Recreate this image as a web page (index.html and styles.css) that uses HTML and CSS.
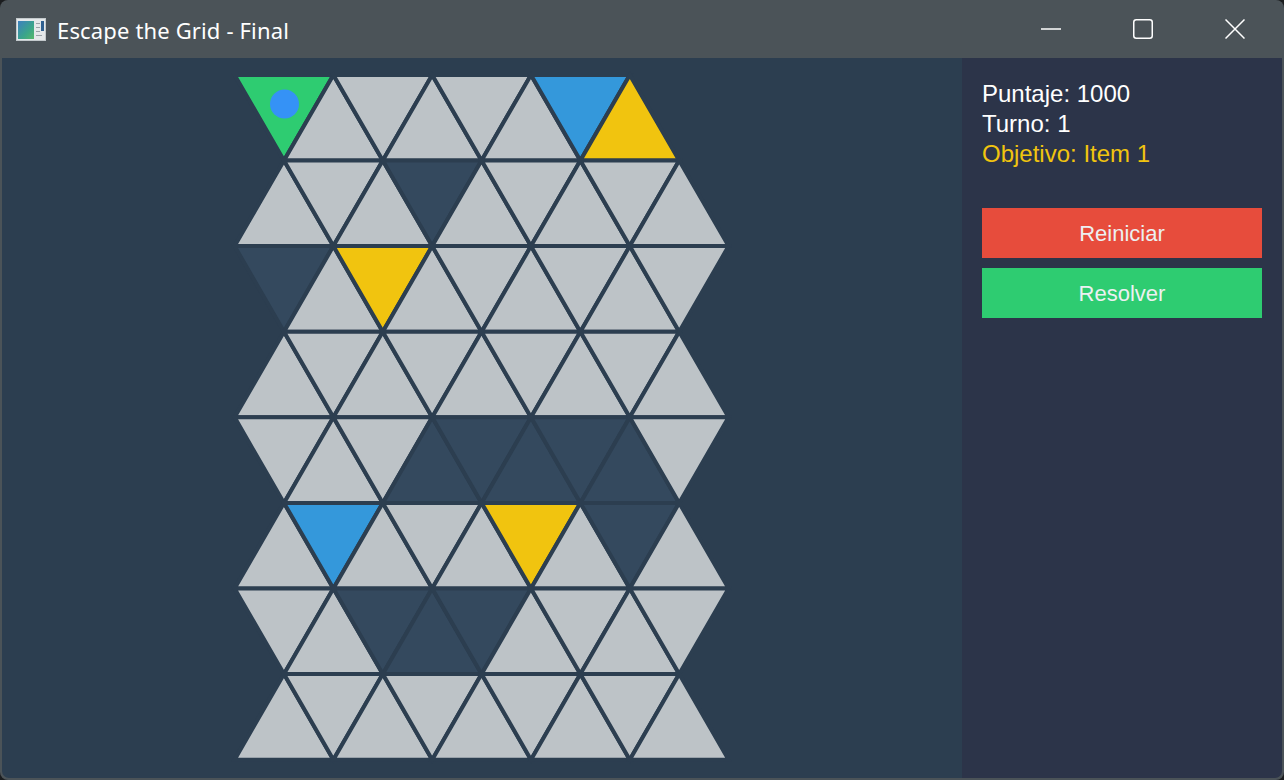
FILE: index.html
```html
<!DOCTYPE html>
<html lang="es">
<head>
<meta charset="utf-8">
<title>Escape the Grid - Final</title>
<link rel="stylesheet" href="styles.css">
</head>
<body>
<div class="window">
  <header class="titlebar">
    <svg class="app-icon" width="30" height="23" viewBox="0 0 30 23">
      <defs>
        <linearGradient id="ig" x1="0" y1="0" x2="1" y2="1">
          <stop offset="0" stop-color="#3d7fc0"/>
          <stop offset="0.6" stop-color="#3aa58a"/>
          <stop offset="1" stop-color="#56b86a"/>
        </linearGradient>
      </defs>
      <rect x="0" y="0" width="30" height="23" fill="#e4e8ea"/>
      <rect x="0.5" y="0.5" width="29" height="22" fill="none" stroke="#c3c9cc"/>
      <rect x="2" y="3" width="16" height="18" fill="url(#ig)"/>
      <rect x="25" y="3" width="3" height="10" fill="#2f5f8f"/>
      <rect x="20" y="5" width="4" height="1" fill="#9aa3a8"/>
      <rect x="20" y="9" width="4" height="1" fill="#9aa3a8"/>
      <rect x="20" y="13" width="4" height="1" fill="#9aa3a8"/>
      <rect x="20" y="17" width="6" height="1" fill="#9aa3a8"/>
    </svg>
    <span class="title">Escape the Grid - Final</span>
    <div class="controls">
      <div class="ctrl">
        <svg width="20" height="20" viewBox="0 0 20 20"><line x1="0" y1="10" x2="20" y2="10" stroke="#fff" stroke-width="1.5"/></svg>
      </div>
      <div class="ctrl">
        <svg width="20" height="20" viewBox="0 0 20 20"><rect x="0.75" y="0.75" width="18.5" height="18.5" rx="2.5" fill="none" stroke="#fff" stroke-width="1.5"/></svg>
      </div>
      <div class="ctrl">
        <svg width="20" height="20" viewBox="0 0 20 20"><path d="M0.5 0.5 L19.5 19.5 M19.5 0.5 L0.5 19.5" stroke="#fff" stroke-width="1.5" fill="none"/></svg>
      </div>
    </div>
  </header>
  <main class="content">
    <section class="game">
      <svg class="board" width="960" height="720" viewBox="2 58 960 720">
        <defs>
          <polygon id="dn" points="0,0 98.8,0 49.4,85.6"/>
          <polygon id="up" points="49.4,0 98.8,85.6 0,85.6"/>
        </defs>
        <g class="cells">
          <!-- row 0 -->
          <use href="#dn" x="234.6" y="74.9" class="c-g"/>
          <use href="#up" x="284" y="74.9" class="c-l"/>
          <use href="#dn" x="333.4" y="74.9" class="c-l"/>
          <use href="#up" x="382.8" y="74.9" class="c-l"/>
          <use href="#dn" x="432.2" y="74.9" class="c-l"/>
          <use href="#up" x="481.6" y="74.9" class="c-l"/>
          <use href="#dn" x="531" y="74.9" class="c-b"/>
          <use href="#up" x="580.4" y="74.9" class="c-y"/>
          <!-- row 1 -->
          <use href="#up" x="234.6" y="160.5" class="c-l"/>
          <use href="#dn" x="284" y="160.5" class="c-l"/>
          <use href="#up" x="333.4" y="160.5" class="c-l"/>
          <use href="#dn" x="382.8" y="160.5" class="c-w"/>
          <use href="#up" x="432.2" y="160.5" class="c-l"/>
          <use href="#dn" x="481.6" y="160.5" class="c-l"/>
          <use href="#up" x="531" y="160.5" class="c-l"/>
          <use href="#dn" x="580.4" y="160.5" class="c-l"/>
          <use href="#up" x="629.8" y="160.5" class="c-l"/>
          <!-- row 2 -->
          <use href="#dn" x="234.6" y="246.1" class="c-w"/>
          <use href="#up" x="284" y="246.1" class="c-l"/>
          <use href="#dn" x="333.4" y="246.1" class="c-y"/>
          <use href="#up" x="382.8" y="246.1" class="c-l"/>
          <use href="#dn" x="432.2" y="246.1" class="c-l"/>
          <use href="#up" x="481.6" y="246.1" class="c-l"/>
          <use href="#dn" x="531" y="246.1" class="c-l"/>
          <use href="#up" x="580.4" y="246.1" class="c-l"/>
          <use href="#dn" x="629.8" y="246.1" class="c-l"/>
          <!-- row 3 -->
          <use href="#up" x="234.6" y="331.7" class="c-l"/>
          <use href="#dn" x="284" y="331.7" class="c-l"/>
          <use href="#up" x="333.4" y="331.7" class="c-l"/>
          <use href="#dn" x="382.8" y="331.7" class="c-l"/>
          <use href="#up" x="432.2" y="331.7" class="c-l"/>
          <use href="#dn" x="481.6" y="331.7" class="c-l"/>
          <use href="#up" x="531" y="331.7" class="c-l"/>
          <use href="#dn" x="580.4" y="331.7" class="c-l"/>
          <use href="#up" x="629.8" y="331.7" class="c-l"/>
          <!-- row 4 -->
          <use href="#dn" x="234.6" y="417.3" class="c-l"/>
          <use href="#up" x="284" y="417.3" class="c-l"/>
          <use href="#dn" x="333.4" y="417.3" class="c-l"/>
          <use href="#up" x="382.8" y="417.3" class="c-w"/>
          <use href="#dn" x="432.2" y="417.3" class="c-w"/>
          <use href="#up" x="481.6" y="417.3" class="c-w"/>
          <use href="#dn" x="531" y="417.3" class="c-w"/>
          <use href="#up" x="580.4" y="417.3" class="c-w"/>
          <use href="#dn" x="629.8" y="417.3" class="c-l"/>
          <!-- row 5 -->
          <use href="#up" x="234.6" y="502.9" class="c-l"/>
          <use href="#dn" x="284" y="502.9" class="c-b"/>
          <use href="#up" x="333.4" y="502.9" class="c-l"/>
          <use href="#dn" x="382.8" y="502.9" class="c-l"/>
          <use href="#up" x="432.2" y="502.9" class="c-l"/>
          <use href="#dn" x="481.6" y="502.9" class="c-y"/>
          <use href="#up" x="531" y="502.9" class="c-l"/>
          <use href="#dn" x="580.4" y="502.9" class="c-w"/>
          <use href="#up" x="629.8" y="502.9" class="c-l"/>
          <!-- row 6 -->
          <use href="#dn" x="234.6" y="588.5" class="c-l"/>
          <use href="#up" x="284" y="588.5" class="c-l"/>
          <use href="#dn" x="333.4" y="588.5" class="c-w"/>
          <use href="#up" x="382.8" y="588.5" class="c-w"/>
          <use href="#dn" x="432.2" y="588.5" class="c-w"/>
          <use href="#up" x="481.6" y="588.5" class="c-l"/>
          <use href="#dn" x="531" y="588.5" class="c-l"/>
          <use href="#up" x="580.4" y="588.5" class="c-l"/>
          <use href="#dn" x="629.8" y="588.5" class="c-l"/>
          <!-- row 7 -->
          <use href="#up" x="234.6" y="674.1" class="c-l"/>
          <use href="#dn" x="284" y="674.1" class="c-l"/>
          <use href="#up" x="333.4" y="674.1" class="c-l"/>
          <use href="#dn" x="382.8" y="674.1" class="c-l"/>
          <use href="#up" x="432.2" y="674.1" class="c-l"/>
          <use href="#dn" x="481.6" y="674.1" class="c-l"/>
          <use href="#up" x="531" y="674.1" class="c-l"/>
          <use href="#dn" x="580.4" y="674.1" class="c-l"/>
          <use href="#up" x="629.8" y="674.1" class="c-l"/>
        </g>
        <circle class="player" cx="284.5" cy="104" r="14.5"/>
      </svg>
    </section>
    <aside class="panel">
      <div class="stats">
        <div class="stat">Puntaje: 1000</div>
        <div class="stat">Turno: 1</div>
        <div class="stat goal">Objetivo: Item 1</div>
      </div>
      <div class="actions">
        <button class="btn btn-reset" type="button">Reiniciar</button>
        <button class="btn btn-solve" type="button">Resolver</button>
      </div>
    </aside>
  </main>
</div>
</body>
</html>
```

FILE: styles.css
```css
html, body {
  margin: 0;
  padding: 0;
  background: #1b1d1f;
}

.window {
  width: 1284px;
  height: 780px;
  box-sizing: border-box;
  border-radius: 8px;
  background: #4b5358;
  display: flex;
  flex-direction: column;
  overflow: hidden;
}

.titlebar {
  height: 58px;
  flex: 0 0 58px;
  display: flex;
  align-items: center;
  padding-left: 16px;
}

.app-icon {
  display: block;
  margin-top: 1px;
}

.title {
  margin-left: 11px;
  margin-top: 2px;
  color: #ffffff;
  font-family: "Noto Sans", "Open Sans", sans-serif;
  font-size: 22px;
  letter-spacing: 0.15px;
}

.controls {
  margin-left: auto;
  margin-right: 3px;
  display: flex;
  height: 100%;
}

.ctrl {
  width: 92px;
  display: flex;
  align-items: center;
  justify-content: center;
}

.ctrl svg {
  display: block;
}

.content {
  flex: 1;
  margin: 0 2px 2px 2px;
  display: flex;
  border-radius: 0 0 7px 7px;
  overflow: hidden;
}

.game {
  width: 960px;
  flex: 0 0 960px;
  background: #2c3e50;
}

.board {
  display: block;
}

.cells {
  stroke: #2c3e50;
  stroke-width: 4;
  stroke-linejoin: miter;
}

.c-l { fill: #bdc3c7; }
.c-w { fill: #34495e; }
.c-g { fill: #2ecc71; }
.c-b { fill: #3498db; }
.c-y { fill: #f1c40f; }

.player {
  fill: #3592f6;
}

.panel {
  flex: 1;
  background: #2c3449;
  padding: 21px 20px 0 20px;
  font-family: "Liberation Sans", Arial, sans-serif;
}

.stat {
  color: #ffffff;
  font-size: 24px;
  line-height: 30px;
}

.stat.goal {
  color: #f1c40f;
}

.actions {
  margin-top: 39px;
  display: flex;
  flex-direction: column;
  gap: 10px;
}

.btn {
  width: 280px;
  height: 50px;
  border: none;
  padding: 0;
  color: #ecf0f1;
  font-family: "Liberation Sans", Arial, sans-serif;
  font-size: 22px;
  line-height: 50px;
  padding-top: 1px;
  cursor: pointer;
}

.btn-reset { background: #e74c3c; }
.btn-solve { background: #2ecc71; }
```
